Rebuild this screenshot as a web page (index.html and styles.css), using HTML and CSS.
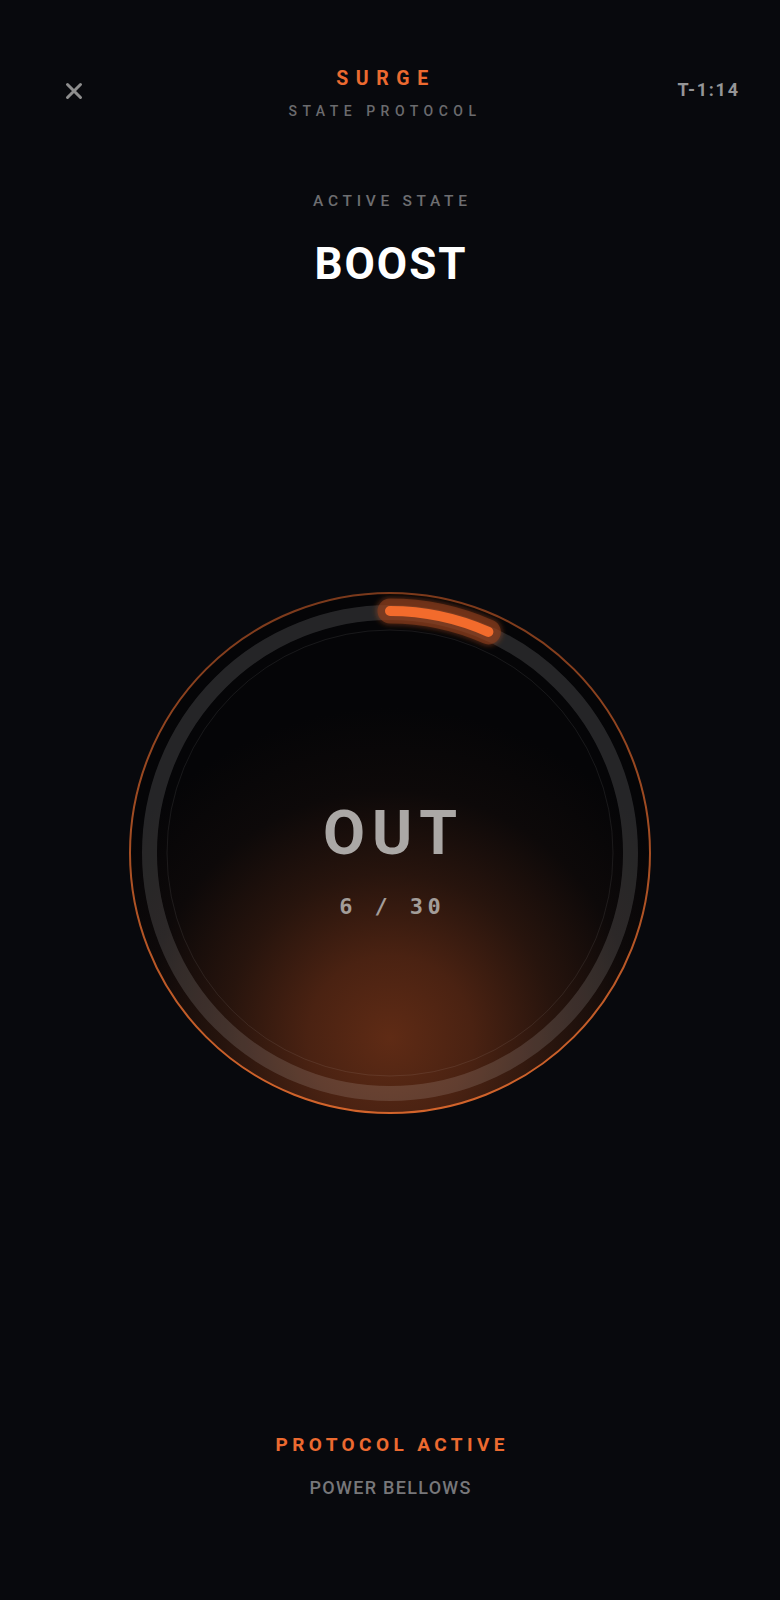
FILE: index.html
```html
<!DOCTYPE html>
<html lang="en">
<head>
<meta charset="utf-8">
<title>Surge — State Protocol</title>
<link rel="stylesheet" href="styles.css">
</head>
<body>
<div class="app">
  <header class="header">
    <button class="close" aria-label="Close">
      <svg viewBox="0 0 18 18" width="18" height="18"><path d="M2.5 2.5 L15.5 15.5 M15.5 2.5 L2.5 15.5" stroke="#8e8e8e" stroke-width="3" stroke-linecap="round" fill="none"/></svg>
    </button>
    <div class="title">
      <div class="brand">SURGE</div>
      <div class="subtitle">STATE PROTOCOL</div>
    </div>
    <div class="timer">T-1:14</div>
  </header>

  <section class="state">
    <div class="state-label">ACTIVE STATE</div>
    <div class="state-name">BOOST</div>
  </section>

  <div class="dial">
    <svg class="dial-svg" viewBox="0 0 540 540" width="540" height="540">
      <defs>
        <radialGradient id="glow" gradientUnits="userSpaceOnUse" cx="270" cy="455" r="330" fx="270" fy="455">
          <stop offset="0" stop-color="#5f2b15"/>
          <stop offset="0.25" stop-color="#4a2212"/>
          <stop offset="0.5" stop-color="#27140d"/>
          <stop offset="0.75" stop-color="#0d0909"/>
          <stop offset="1" stop-color="#050507"/>
        </radialGradient>
        <linearGradient id="ringGrad" x1="0" y1="0" x2="0" y2="1">
          <stop offset="0" stop-color="#7a391b"/>
          <stop offset="1" stop-color="#d3642b"/>
        </linearGradient>
        <filter id="blur" x="-30%" y="-100%" width="160%" height="300%">
          <feGaussianBlur stdDeviation="2.5"/>
        </filter>
      </defs>
      <circle cx="270" cy="270" r="260" fill="url(#glow)"/>
      <circle cx="270" cy="270" r="260" fill="none" stroke="url(#ringGrad)" stroke-width="2"/>
      <circle cx="270" cy="270" r="240.5" fill="none" stroke="rgba(255,255,255,0.13)" stroke-width="15"/>
      <circle cx="270" cy="270" r="223" fill="none" stroke="rgba(255,255,255,0.08)" stroke-width="1"/>
      <path d="M270 28 A242 242 0 0 1 368.4 48.9" fill="none" stroke="rgba(230,100,40,0.3)" stroke-width="28" stroke-linecap="round" filter="url(#blur)"/>
      <path d="M270 28 A242 242 0 0 1 368.4 48.9" fill="none" stroke="rgba(140,62,28,0.6)" stroke-width="25" stroke-linecap="round"/>
      <path d="M270 28 A242 242 0 0 1 368.4 48.9" fill="none" stroke="#f26b2c" stroke-width="10" stroke-linecap="round"/>
    </svg>
    <div class="dial-text">
      <div class="phase">OUT</div>
      <div class="count">6 / 30</div>
    </div>
  </div>

  <footer class="footer">
    <div class="status">PROTOCOL ACTIVE</div>
    <div class="exercise">POWER BELLOWS</div>
  </footer>
</div>
</body>
</html>
```

FILE: styles.css
```css
html, body {
  margin: 0;
  padding: 0;
  background: #08090d;
}

.app {
  width: 780px;
  height: 1600px;
  display: flex;
  flex-direction: column;
  align-items: center;
  font-family: Roboto, "Liberation Sans", sans-serif;
  background: #08090d;
}

.header {
  width: 100%;
  box-sizing: border-box;
  padding: 68px 42px 0 65px;
  display: flex;
  align-items: flex-start;
  justify-content: space-between;
}

.close {
  width: 18px;
  height: 18px;
  margin-top: 14px;
  padding: 0;
  border: 0;
  background: none;
  display: flex;
}

.title {
  display: flex;
  flex-direction: column;
  align-items: center;
  margin-left: 4px;
}

.brand {
  font-size: 19.5px;
  line-height: 22px;
  font-weight: 700;
  letter-spacing: 7.6px;
  margin-right: -7.6px;
  color: #ec6a30;
}

.subtitle {
  margin-top: 12px;
  font-size: 14px;
  line-height: 18px;
  font-weight: 500;
  letter-spacing: 5.5px;
  margin-right: -5.5px;
  color: #6b6b6e;
}

.timer {
  margin-top: 12px;
  font-size: 18px;
  line-height: 20px;
  font-weight: 700;
  letter-spacing: 1.7px;
  margin-right: -1.7px;
  color: #959597;
}

.state {
  margin-top: 72px;
  display: flex;
  flex-direction: column;
  align-items: center;
}

.state-label {
  font-size: 15.5px;
  line-height: 18px;
  font-weight: 500;
  letter-spacing: 4.7px;
  margin-right: -4.7px;
  color: #6e6e71;
}

.state-name {
  margin-top: 28px;
  font-size: 44px;
  line-height: 52px;
  font-weight: 700;
  letter-spacing: 2px;
  margin-right: -2px;
  color: #ffffff;
}

.dial {
  margin-top: 293px;
  width: 540px;
  height: 540px;
  position: relative;
}

.dial-svg {
  display: block;
}

.dial-text {
  position: absolute;
  left: 0;
  right: 0;
  top: 0;
  bottom: 0;
  display: flex;
  flex-direction: column;
  align-items: center;
  padding-top: 215px;
  box-sizing: border-box;
}

.phase {
  font-size: 61px;
  line-height: 70px;
  font-weight: 700;
  letter-spacing: 7px;
  margin-right: -7px;
  color: #aba8a6;
}

.count {
  margin-top: 27px;
  font-family: "DejaVu Sans Mono", "Liberation Mono", monospace;
  font-size: 22px;
  line-height: 24px;
  font-weight: 700;
  letter-spacing: 4.4px;
  margin-right: -4.4px;
  color: #a39d99;
}

.footer {
  margin-top: 311px;
  display: flex;
  flex-direction: column;
  align-items: center;
}

.status {
  font-size: 19px;
  line-height: 22px;
  font-weight: 700;
  letter-spacing: 4.4px;
  margin-right: -4.4px;
  color: #ec6a30;
}

.exercise {
  margin-top: 21px;
  font-size: 18px;
  line-height: 22px;
  font-weight: 500;
  letter-spacing: 1.3px;
  margin-right: -1.3px;
  color: #77777a;
}
```
